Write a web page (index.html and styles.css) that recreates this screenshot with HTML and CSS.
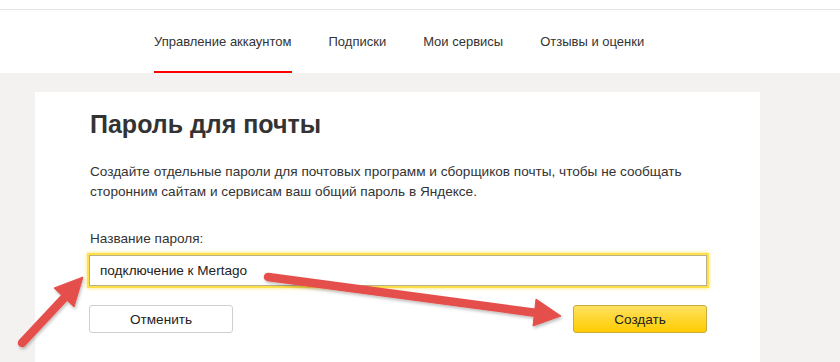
FILE: index.html
```html
<!DOCTYPE html>
<html lang="ru">
<head>
    <meta charset="UTF-8">
    <meta name="viewport" content="width=device-width, initial-scale=1.0">
    <title>Пароль для почты</title>
    <link rel="stylesheet" href="styles.css">
</head>
<body>
    <div class="header">
        <div class="top-line"></div>
        <div class="nav">
            <a class="nav-item active" href="#">Управление аккаунтом</a>
            <a class="nav-item" href="#">Подписки</a>
            <a class="nav-item" href="#">Мои сервисы</a>
            <a class="nav-item" href="#">Отзывы и оценки</a>
        </div>
    </div>

    <div class="main">
        <div class="card">
            <h1 class="title">Пароль для почты</h1>
            <p class="desc">Создайте отдельные пароли для почтовых программ и сборщиков почты, чтобы не сообщать сторонним сайтам и сервисам ваш общий пароль в Яндексе.</p>
            <label class="field-label" for="pwdName">Название пароля:</label>
            <input class="field" id="pwdName" type="text" value="подключение к Mertago">
            <div class="buttons">
                <button class="btn btn-cancel">Отменить</button>
                <button class="btn btn-create">Создать</button>
            </div>
        </div>
    </div>

    <svg class="arrows" width="840" height="362" viewBox="0 0 840 362">
        <defs>
            <filter id="shadow" x="-20%" y="-20%" width="140%" height="140%">
                <feDropShadow dx="1" dy="2" stdDeviation="1.5" flood-color="#000" flood-opacity="0.25"/>
            </filter>
        </defs>
        <g fill="#e5504b" stroke="#e5504b" filter="url(#shadow)">
            <line x1="22" y1="343" x2="66" y2="296" stroke-width="8.5" stroke-linecap="round"/>
            <polygon points="83,277 74,307 54,288" stroke-width="1" stroke-linejoin="round"/>
            <line x1="268" y1="277" x2="537" y2="313" stroke-width="8.5" stroke-linecap="round"/>
            <polygon points="561,316 533,326 536,299" stroke-width="1" stroke-linejoin="round"/>
        </g>
    </svg>
</body>
</html>
```

FILE: styles.css
```css
body {
    margin: 0;
    height: 362px;
    overflow: hidden;
    position: relative;
    background-color: #f3f2f0;
    font-family: "Liberation Sans", Arial, sans-serif;
    color: #333;
}
.header {
    background-color: #fff;
    height: 73px;
}
.top-line {
    height: 9px;
    border-bottom: 1px solid #e5e5e5;
}
.nav {
    display: flex;
    gap: 37px;
    padding-left: 154px;
    height: 63px;
}
.nav-item {
    display: flex;
    align-items: center;
    box-sizing: border-box;
    padding-top: 2px;
    border-bottom: 2px solid transparent;
    font-size: 13px;
    color: #333;
    text-decoration: none;
}
.nav-item.active {
    border-bottom-color: #f00;
}
.main {
    padding: 19px 0 0 35px;
}
.card {
    width: 671px;
    height: 252px;
    background-color: #fff;
    padding: 18px 0 0 54px;
}
.title {
    margin: 0 0 0 1px;
    font-size: 25px;
    line-height: 28px;
    font-weight: bold;
}
.desc {
    max-width: 618px;
    margin: 24px 0 0 1px;
    font-size: 13.6px;
    line-height: 20px;
}
.field-label {
    display: block;
    margin: 27px 0 0 1px;
    font-size: 13.6px;
    line-height: 20px;
}
.field {
    display: block;
    box-sizing: border-box;
    width: 618px;
    height: 31px;
    margin-top: 6px;
    padding: 0 0 0 10px;
    border: 1px solid #b8b08a;
    outline: none;
    box-shadow: 0 0 0 2px #ffdf4a, 0 0 4px 2px rgba(255, 214, 0, 0.6);
    font-family: "Liberation Sans", Arial, sans-serif;
    font-size: 13.6px;
    color: #222;
}
.buttons {
    display: flex;
    justify-content: space-between;
    width: 618px;
    margin-top: 19px;
}
.btn {
    height: 28px;
    border-radius: 3px;
    font-family: "Liberation Sans", Arial, sans-serif;
    font-size: 13.6px;
    color: #222;
    cursor: pointer;
}
.btn-cancel {
    width: 144px;
    background-color: #fff;
    border: 1px solid #cfcfcf;
}
.btn-create {
    width: 134px;
    background: linear-gradient(#ffe160, #ffcc00);
    border: 1px solid #c8ad3c;
}
.arrows {
    position: absolute;
    top: 0;
    left: 0;
    pointer-events: none;
}
```
